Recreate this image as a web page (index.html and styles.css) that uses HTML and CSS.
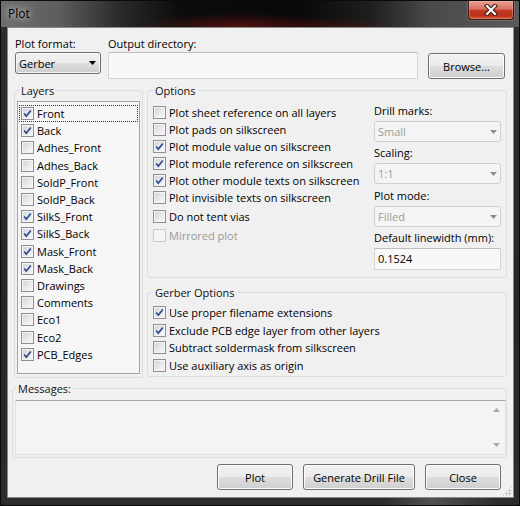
FILE: index.html
```html
<!DOCTYPE html>
<html>
<head>
<meta charset="utf-8">
<title>Plot</title>
<link rel="stylesheet" href="styles.css">
</head>
<body>
<div class="window">
  <div class="titlebar">
    <div class="title">Plot</div>
    <div class="close">
      <svg width="14" height="12" viewBox="0 0 14 12">
        <path d="M3 2 L11 10 M11 2 L3 10" stroke="#3a1410" stroke-width="4.2" stroke-linecap="square" fill="none"/>
        <path d="M3 2 L11 10 M11 2 L3 10" stroke="#ffffff" stroke-width="2.2" stroke-linecap="square" fill="none"/>
      </svg>
    </div>
  </div>
  <div class="client">
    <div class="toprow">
      <div class="fmt">
        <div class="lbl">Plot format:</div>
        <div class="combo"><span>Gerber</span><svg class="arrow" width="7" height="4" viewBox="0 0 7 4"><polygon points="0,0 7,0 3.5,4" fill="#000"/></svg></div>
      </div>
      <div class="outdir">
        <div class="lbl">Output directory:</div>
        <div class="textbox wide"></div>
      </div>
      <div class="btn browse">Browse...</div>
    </div>

    <div class="mainrow">
      <fieldset class="group layers">
        <legend class="leg-l">Layers</legend>
        <div class="listbox">
          <div class="item focus"><span class="cb"><svg width="11" height="11" viewBox="0 0 11 11"><path d="M2.2 5.4 L4.3 8.2 L8.8 2.4" fill="none" stroke="#2b4a8e" stroke-width="1.7"/></svg></span>Front</div>
          <div class="item"><span class="cb"><svg width="11" height="11" viewBox="0 0 11 11"><path d="M2.2 5.4 L4.3 8.2 L8.8 2.4" fill="none" stroke="#2b4a8e" stroke-width="1.7"/></svg></span>Back</div>
          <div class="item"><span class="cb"></span>Adhes_Front</div>
          <div class="item"><span class="cb"></span>Adhes_Back</div>
          <div class="item"><span class="cb"></span>SoldP_Front</div>
          <div class="item"><span class="cb"></span>SoldP_Back</div>
          <div class="item"><span class="cb"><svg width="11" height="11" viewBox="0 0 11 11"><path d="M2.2 5.4 L4.3 8.2 L8.8 2.4" fill="none" stroke="#2b4a8e" stroke-width="1.7"/></svg></span>SilkS_Front</div>
          <div class="item"><span class="cb"><svg width="11" height="11" viewBox="0 0 11 11"><path d="M2.2 5.4 L4.3 8.2 L8.8 2.4" fill="none" stroke="#2b4a8e" stroke-width="1.7"/></svg></span>SilkS_Back</div>
          <div class="item"><span class="cb"><svg width="11" height="11" viewBox="0 0 11 11"><path d="M2.2 5.4 L4.3 8.2 L8.8 2.4" fill="none" stroke="#2b4a8e" stroke-width="1.7"/></svg></span>Mask_Front</div>
          <div class="item"><span class="cb"><svg width="11" height="11" viewBox="0 0 11 11"><path d="M2.2 5.4 L4.3 8.2 L8.8 2.4" fill="none" stroke="#2b4a8e" stroke-width="1.7"/></svg></span>Mask_Back</div>
          <div class="item"><span class="cb"></span>Drawings</div>
          <div class="item"><span class="cb"></span>Comments</div>
          <div class="item"><span class="cb"></span>Eco1</div>
          <div class="item"><span class="cb"></span>Eco2</div>
          <div class="item"><span class="cb"><svg width="11" height="11" viewBox="0 0 11 11"><path d="M2.2 5.4 L4.3 8.2 L8.8 2.4" fill="none" stroke="#2b4a8e" stroke-width="1.7"/></svg></span>PCB_Edges</div>
        </div>
      </fieldset>

      <div class="rightcol">
        <fieldset class="group options">
          <legend class="leg-o">Options</legend>
          <div class="optbody">
            <div class="checks">
              <div class="chk"><span class="cb"></span>Plot sheet reference on all layers</div>
              <div class="chk"><span class="cb"></span>Plot pads on silkscreen</div>
              <div class="chk"><span class="cb"><svg width="11" height="11" viewBox="0 0 11 11"><path d="M2.2 5.4 L4.3 8.2 L8.8 2.4" fill="none" stroke="#2b4a8e" stroke-width="1.7"/></svg></span>Plot module value on silkscreen</div>
              <div class="chk"><span class="cb"><svg width="11" height="11" viewBox="0 0 11 11"><path d="M2.2 5.4 L4.3 8.2 L8.8 2.4" fill="none" stroke="#2b4a8e" stroke-width="1.7"/></svg></span>Plot module reference on silkscreen</div>
              <div class="chk"><span class="cb"><svg width="11" height="11" viewBox="0 0 11 11"><path d="M2.2 5.4 L4.3 8.2 L8.8 2.4" fill="none" stroke="#2b4a8e" stroke-width="1.7"/></svg></span>Plot other module texts on silkscreen</div>
              <div class="chk"><span class="cb"></span>Plot invisible texts on silkscreen</div>
              <div class="chk gap"><span class="cb"></span>Do not tent vias</div>
              <div class="chk gap disabled"><span class="cb"></span>Mirrored plot</div>
            </div>
            <div class="settings">
              <div class="lbl">Drill marks:</div>
              <div class="combo dis s1"><span>Small</span><svg class="arrow" width="7" height="4" viewBox="0 0 7 4"><polygon points="0,0 7,0 3.5,4" fill="#8c8c8c"/></svg></div>
              <div class="lbl">Scaling:</div>
              <div class="combo dis s2"><span>1:1</span><svg class="arrow" width="7" height="4" viewBox="0 0 7 4"><polygon points="0,0 7,0 3.5,4" fill="#8c8c8c"/></svg></div>
              <div class="lbl">Plot mode:</div>
              <div class="combo dis s3"><span>Filled</span><svg class="arrow" width="7" height="4" viewBox="0 0 7 4"><polygon points="0,0 7,0 3.5,4" fill="#8c8c8c"/></svg></div>
              <div class="lbl">Default linewidth (mm):</div>
              <div class="textbox small">0.1524</div>
            </div>
          </div>
        </fieldset>

        <fieldset class="group gerber">
          <legend class="leg-o">Gerber Options</legend>
          <div class="gbody">
            <div class="chk g"><span class="cb"><svg width="11" height="11" viewBox="0 0 11 11"><path d="M2.2 5.4 L4.3 8.2 L8.8 2.4" fill="none" stroke="#2b4a8e" stroke-width="1.7"/></svg></span>Use proper filename extensions</div>
            <div class="chk g"><span class="cb"><svg width="11" height="11" viewBox="0 0 11 11"><path d="M2.2 5.4 L4.3 8.2 L8.8 2.4" fill="none" stroke="#2b4a8e" stroke-width="1.7"/></svg></span>Exclude PCB edge layer from other layers</div>
            <div class="chk g"><span class="cb"></span>Subtract soldermask from silkscreen</div>
            <div class="chk g"><span class="cb"></span>Use auxiliary axis as origin</div>
          </div>
        </fieldset>
      </div>
    </div>

    <fieldset class="group messages">
      <legend class="leg-m">Messages:</legend>
      <div class="msgbox">
        <div class="msgtext"></div>
        <div class="scroll">
          <svg width="7" height="4" viewBox="0 0 7 4"><polygon points="0,4 7,4 3.5,0" fill="#a9a9a9"/></svg>
          <svg width="7" height="4" viewBox="0 0 7 4"><polygon points="0,0 7,0 3.5,4" fill="#a9a9a9"/></svg>
        </div>
      </div>
    </fieldset>

    <div class="buttons">
      <div class="btn b-plot">Plot</div>
      <div class="btn b-drill">Generate Drill File</div>
      <div class="btn b-close">Close</div>
    </div>
    <div class="grip"></div>
  </div>
</div>
</body>
</html>
```
FILE: styles.css
```css
* { box-sizing: border-box; }
html, body { margin: 0; padding: 0; }
body {
  font-family: "Open Sans", "Noto Sans", sans-serif;
  font-size: 11px;
  color: #000;
  background: #1c1c1c;
}

.window {
  width: 520px;
  height: 506px;
  position: relative;
  overflow: hidden;
  border: 1px solid #0a0a0a;
  background:
    linear-gradient(90deg, rgba(0,0,0,0) 0, rgba(0,0,0,0) 380px, rgba(150,150,150,0.35) 430px, rgba(0,0,0,0) 500px),
    linear-gradient(180deg, #2e2e2e 0, #262626 300px, #2c2c2c 506px);
}

/* title bar */
.titlebar {
  height: 27px;
  display: flex;
  align-items: flex-start;
  margin: -1px -1px 0;
  background:
    radial-gradient(ellipse 100px 14px at 240px 27px, rgba(140,25,20,0.55), rgba(0,0,0,0)),
    radial-gradient(ellipse 60px 10px at 340px 27px, rgba(110,20,20,0.35), rgba(0,0,0,0)),
    linear-gradient(90deg, #6e6e6e 0, #5d5d5d 60px, #2a2a2a 120px, #0c0c0c 180px, #080808 300px, #1e1e1e 370px, #4a4a4a 430px, #5a5a5a 520px);
}
.title {
  padding: 6px 0 0 8px;
  font-size: 12px;
  line-height: 16px;
  color: #000;
  text-shadow: 0 0 6px rgba(255,255,255,0.85), 0 0 12px rgba(255,255,255,0.55);
}
.close {
  margin: 1px 6px 0 auto;
  width: 46px;
  height: 19px;
  border: 1px solid #3b1511;
  border-top: none;
  border-radius: 0 0 4px 4px;
  background: linear-gradient(180deg, #e6a091 0%, #d7725f 45%, #c23a22 52%, #bb3119 80%, #d25a3c 100%);
  box-shadow: inset 0 0 0 1px rgba(255,200,190,0.35), 0 0 0 1px rgba(255,255,255,0.15);
  display: flex;
  align-items: center;
  justify-content: center;
}

/* client area */
.client {
  position: relative;
  margin-left: 6px;
  width: 507px;
  height: 471px;
  border: 1px solid #8a8a8a;
  background: #f0f0f0;
}

.lbl { line-height: 16px; white-space: nowrap; }

.toprow {
  display: flex;
  align-items: flex-start;
  padding: 8px 0 0 7px;
}
.fmt { width: 86px; }
.outdir { margin-left: 7px; }

.combo {
  height: 22px;
  border: 1px solid #707070;
  border-radius: 3px;
  background: linear-gradient(180deg, #f2f2f2 0%, #ebebeb 48%, #dddddd 52%, #cfcfcf 100%);
  box-shadow: inset 0 0 0 1px rgba(255,255,255,0.7);
  display: flex;
  align-items: center;
  justify-content: space-between;
  padding: 0 4px 0 3px;
}
.combo.dis {
  height: 21px;
  border-color: #d0d0d0;
  background: #f4f4f4;
  box-shadow: none;
  color: #9c9c9c;
  margin-top: 2px;
  padding-right: 3px;
}
.combo.s1 { margin-bottom: 3px; }
.combo.s2 { margin-bottom: 4px; }
.combo.s3 { margin-bottom: 3px; }

.textbox {
  border: 1px solid #d5d5d5;
  border-top-color: #bfbfbf;
  background: #f8f8f8;
}
.textbox.wide { width: 310px; height: 27px; }
.textbox.small {
  margin-top: 2px;
  height: 22px;
  line-height: 19px;
  padding-left: 3px;
}

.btn {
  height: 26px;
  border: 1px solid #707070;
  border-radius: 3px;
  background: linear-gradient(180deg, #f2f2f2 0%, #ebebeb 48%, #dddddd 52%, #cfcfcf 100%);
  box-shadow: inset 0 0 0 1px #fcfcfc;
  display: flex;
  align-items: center;
  justify-content: center;
  white-space: nowrap;
}
.browse { margin: 17px 0 0 10px; width: 77px; }

/* group boxes */
fieldset.group {
  margin: 0;
  padding: 0;
  min-width: 0;
  border: 1px solid #d5dfe5;
  border-radius: 3px;
}
fieldset.group legend {
  padding: 0 2px;
  line-height: 15px;
  font-size: 11px;
  color: #111;
}
.leg-l { margin-left: 4px; }
.leg-o { margin-left: 5px; }
.leg-m { margin-left: 3px; }

.mainrow {
  display: flex;
  margin-top: 4px;
}
.layers {
  margin-left: 6px !important;
  width: 129px;
  height: 295px;
}
.listbox {
  margin: 3px 2px 0;
  height: 273px;
  border: 1px solid #a3a3a3;
  background: #f6f6f6;
  padding-top: 3px;
}
.item {
  height: 17.2px;
  margin: 0 1px;
  padding-left: 2px;
  display: flex;
  align-items: center;
  white-space: nowrap;
}
.item.focus { outline: 1px dotted #333; outline-offset: -1px; }

.cb {
  flex: none;
  width: 13px;
  height: 13px;
  margin-right: 3px;
  border: 1px solid #8f8f8f;
  background: linear-gradient(135deg, #cdd0d5 0%, #e6e8ea 50%, #f9f9f9 100%);
  box-shadow: inset 0 0 0 1px #f4f4f4;
  display: flex;
}
.cb svg { display: block; }

.rightcol {
  margin-left: 4px;
  width: 360px;
  display: flex;
  flex-direction: column;
}
.options { height: 195px; }
.optbody {
  display: flex;
  padding: 0 5px;
}
.checks { flex: 1; padding-top: 6px; }
.chk {
  height: 17px;
  display: flex;
  align-items: center;
  white-space: nowrap;
}
.chk.gap { margin-top: 2px; }
.chk.disabled { color: #9a9a9a; }
.chk.disabled .cb {
  border-color: #c9c9c9;
  background: #f4f4f4;
  box-shadow: none;
}
.settings { width: 127px; padding-top: 5px; }

.gerber { margin-top: 7px !important; height: 92px; }
.gbody { padding: 4px 5px 0; }
.chk.g { height: 17.6px; }

.messages {
  margin: 3px 0 0 4px !important;
  width: 495px;
  height: 77px;
}
.msgbox {
  margin: 4px 0 0 2px;
  width: 491px;
  height: 55px;
  border: 1px solid #dde3e8;
  border-top-color: #a8a8a8;
  background: #f4f4f4;
  display: flex;
}
.msgtext { flex: 1; }
.scroll {
  width: 17px;
  display: flex;
  flex-direction: column;
  justify-content: space-between;
  align-items: center;
  padding: 7px 0 7px;
}
.scroll svg { display: block; }

.buttons {
  display: flex;
  justify-content: flex-end;
  gap: 10px;
  margin-top: 6px;
  padding-right: 12px;
}
.b-plot { width: 76px; }
.b-drill { width: 112px; }
.b-close { width: 76px; }

.grip {
  position: absolute;
  right: 1px;
  bottom: 1px;
  width: 10px;
  height: 10px;
  background-image: radial-gradient(circle, #b5b5b5 0.8px, rgba(0,0,0,0) 1.2px);
  background-size: 3px 3px;
  clip-path: polygon(100% 0, 100% 100%, 0 100%);
}
```
